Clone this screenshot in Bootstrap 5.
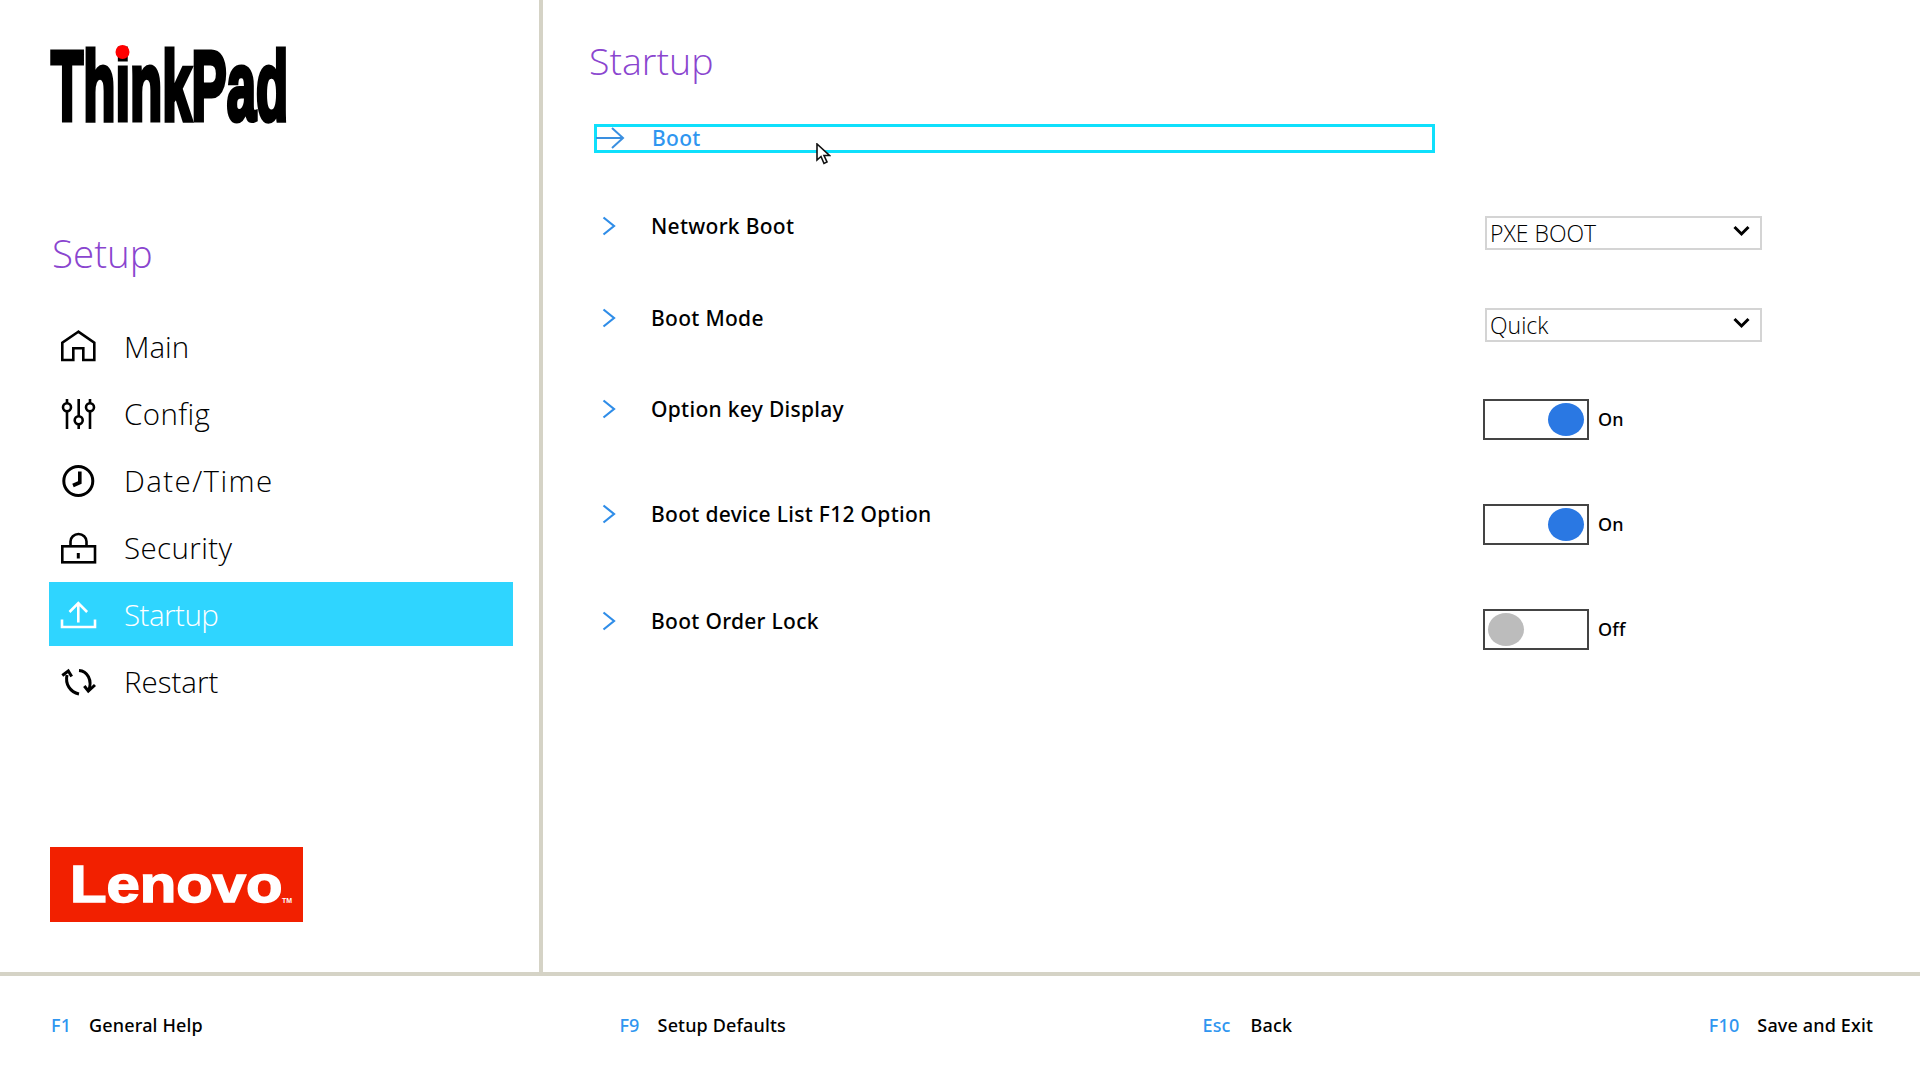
<!doctype html>
<html lang="en">
<head>
<meta charset="utf-8">
<title>ThinkPad Setup</title>
<link rel="stylesheet" href="https://cdn.jsdelivr.net/npm/bootstrap@5.3.0/dist/css/bootstrap.min.css">
<style>
html,body{height:100%;overflow:hidden;background:#fff}
body{font-family:"Open Sans","Noto Sans",sans-serif;color:#000}
.top-area{height:972px}
.side-pane{width:543px;flex:none;border-right:4px solid #d5d3c6;padding:24px 26px 0 50px}
.logo-think{display:block;width:240px;height:120px}
.logo-think text{font:700 98px "Liberation Sans",sans-serif;fill:#000;stroke:#000;stroke-width:5px}
.setup-title{font-size:38.500px;font-weight:300;color:#8a45cf;margin:83px 0 0 2px;line-height:52px;height:52px}
.side-nav{margin:35px 0 0 -1px;display:flex;flex-direction:column;gap:3px}
.side-item{height:64px;display:flex;align-items:center;color:#000;font-size:29.500px;font-weight:300;text-decoration:none;padding:2px 0 0 11px}
.side-item svg{width:38px;height:36px;flex:none;margin-right:26px;fill:none;stroke:#000;stroke-width:2.600}
.side-item.is-active{background:#2fd5ff;color:#fff}
.side-item.is-active svg{stroke:#fff}
.wide-label{letter-spacing:1.400px}
.mid-label{letter-spacing:.4px}
.tight-label{letter-spacing:-.5px}
.logo-lenovo{display:block;margin-top:134px;width:253px;height:75px}
.logo-lenovo text{font-family:"Liberation Sans",sans-serif;font-weight:700;fill:#fff}
.main-pane{padding:36px 0 0 46px}
.page-title{font-size:37.500px;font-weight:300;color:#8a45cf;margin:0;line-height:50px;height:50px}
.focus-row{position:relative;width:841px;height:29px;margin:38px 0 0 5px;border:3px solid #0fe0fc;display:flex;align-items:center;color:#2f96f0;font-family:"Noto Sans","Open Sans",sans-serif;font-size:21px;font-weight:500;letter-spacing:.3px;padding:1px 0 0 55px}
.focus-row svg.arrow{position:absolute;left:-1px;top:0;width:30px;height:22px;fill:none;stroke:#3a8fe0;stroke-width:2}
.pointer{position:absolute;left:219px;top:16px;width:15px;height:22px}
.setting-grid{display:grid;grid-template-rows:92px 91px 105px 105px 60px;margin-top:63px;margin-left:1px}
.setting-row{display:flex;align-items:flex-start}
.setting-name{width:893px;flex:none;display:flex;align-items:center;font-family:"Noto Sans","Open Sans",sans-serif;font-size:21px;font-weight:500;letter-spacing:.3px;height:22px;color:#000}
.setting-name.nudge-low{margin-top:2px}
.setting-name svg{width:14px;height:20px;flex:none;margin:-2px 35px 0 12px;fill:none;stroke:#2f8de8;stroke-width:2.200}
.opt-select{width:277px;height:34px;margin-left:2px;border:2px solid #d4d4d4;border-radius:0;padding:0 30px 0 3px;font-size:23px;font-weight:300;color:#000;line-height:30px;background-position:right 10px top 7px;background-size:17px 12px;background-image:url("data:image/svg+xml,%3csvg xmlns='http://www.w3.org/2000/svg' viewBox='0 0 17 12'%3e%3cpath fill='none' stroke='%23000' stroke-width='3' d='M1.500 2l7 7 7-7'/%3e%3c/svg%3e")}
.opt-toggle{display:flex;align-items:center;gap:9px;font-family:"Noto Sans","Open Sans",sans-serif;font-size:18px;font-weight:500;letter-spacing:.2px}
.toggle-box{width:106px;height:41px;border:2px solid #444;display:flex;align-items:center;padding:0 3px;background:#fff}
.toggle-box.on{justify-content:flex-end}
.toggle-knob{width:36px;height:33px;border-radius:50%;background:#2a78e3}
.toggle-box:not(.on) .toggle-knob{background:#bcbcbc}
.foot-bar{flex-grow:1;border-top:4px solid #d5d3c6;padding:0 47px 6px 51px;display:flex;justify-content:space-between;align-items:center;font-family:"Noto Sans","Open Sans",sans-serif;font-size:18px;font-weight:500;letter-spacing:.15px}
.foot-key{color:#2f96f0;font-weight:500;margin-right:18px}
.foot-key.gap-wide{margin-right:20px}
</style>
</head>
<body>
<div class="d-flex flex-column vh-100">
  <div class="top-area d-flex">
    <aside class="side-pane">
      <svg class="logo-think" viewBox="0 0 240 120" role="img" aria-label="ThinkPad">
        <text transform="translate(1,95.500) scale(.538,1)">ThinkPad</text>
        <circle cx="72.500" cy="28" r="7" fill="#f00"/>
      </svg>
      <h2 class="setup-title">Setup</h2>
      <nav class="side-nav">
        <a class="side-item" href="#"><svg viewBox="0 0 38 36"><path d="M18.300 2.700L2.300 13.700V31H13.300V19.300H23.300V31H34.300V13.700Z"/></svg>Main</a>
        <a class="side-item" href="#"><svg viewBox="0 0 38 36"><path d="M7 3V7M7 15.500V33M18.700 3V20M18.700 28.500V33M30 3V7M30 15.500V33"/><circle cx="7" cy="11.300" r="4"/><circle cx="18.700" cy="24.300" r="4"/><circle cx="30" cy="11.300" r="4"/></svg><span class="mid-label">Config</span></a>
        <a class="side-item" href="#"><svg viewBox="0 0 38 36"><circle cx="18.300" cy="18" r="14.500" stroke-width="3"/><path d="M19.800 8.500V19.500L13 22.500" stroke-width="3.600"/></svg><span class="wide-label">Date/Time</span></a>
        <a class="side-item" href="#"><svg viewBox="0 0 38 36"><rect x="2.300" y="16.300" width="32.700" height="16"/><path d="M10.500 16.300V11.500a8 7.500 0 0 1 16 0V16.300"/><path d="M18.300 23v5.500" stroke-width="3"/></svg><span class="mid-label">Security</span></a>
        <a class="side-item is-active" href="#"><svg viewBox="0 0 38 36"><path d="M18.300 25.500V6.500M9.500 15l8.800-9 8.800 9"/><path d="M2 22.500V30H35V22.500"/></svg><span class="tight-label">Startup</span></a>
        <a class="side-item" href="#"><svg viewBox="0 0 38 36"><path d="M7 11C5 20 10 28 19 30" stroke-width="3"/><path d="M2.300 11.500L8.300 7L11.700 12.500" stroke-width="3"/><path d="M19 6.500C27 7 33 16 28.500 27" stroke-width="3"/><path d="M24.300 22L28.300 27L35 21" stroke-width="3"/></svg>Restart</a>
      </nav>
      <svg class="logo-lenovo" viewBox="0 0 253 75" role="img" aria-label="Lenovo">
        <rect width="253" height="75" fill="#f22000"/>
        <text transform="translate(20,55) scale(1.150,1)" font-size="52" stroke="#fff" stroke-width="1.500">Lenovo</text>
        <text x="232" y="56" font-size="7">TM</text>
      </svg>
    </aside>
    <main class="main-pane flex-grow-1">
      <h1 class="page-title">Startup</h1>
      <div class="focus-row">
        <svg class="arrow" viewBox="0 0 30 22"><path d="M0 11H27M16 1L27 11L16 21"/></svg>
        Boot
        <svg class="pointer" viewBox="0 0 15 22"><path d="M1 1V17L5 13.500L8 20.500L11 19L8 12.500H13.500Z" fill="#fff" stroke="#111" stroke-width="1.600"/></svg>
      </div>
      <div class="setting-grid">
        <div class="setting-row">
          <div class="setting-name"><svg viewBox="0 0 14 20"><path d="M1.500 1.500L12 10L1.500 18.500"/></svg>Network Boot</div>
          <select class="form-select opt-select"><option>PXE BOOT</option></select>
        </div>
        <div class="setting-row">
          <div class="setting-name"><svg viewBox="0 0 14 20"><path d="M1.500 1.500L12 10L1.500 18.500"/></svg>Boot Mode</div>
          <select class="form-select opt-select"><option>Quick</option></select>
        </div>
        <div class="setting-row">
          <div class="setting-name"><svg viewBox="0 0 14 20"><path d="M1.500 1.500L12 10L1.500 18.500"/></svg>Option key Display</div>
          <div class="opt-toggle"><div class="toggle-box on"><div class="toggle-knob"></div></div>On</div>
        </div>
        <div class="setting-row">
          <div class="setting-name"><svg viewBox="0 0 14 20"><path d="M1.500 1.500L12 10L1.500 18.500"/></svg>Boot device List F12 Option</div>
          <div class="opt-toggle"><div class="toggle-box on"><div class="toggle-knob"></div></div>On</div>
        </div>
        <div class="setting-row">
          <div class="setting-name nudge-low"><svg viewBox="0 0 14 20"><path d="M1.500 1.500L12 10L1.500 18.500"/></svg>Boot Order Lock</div>
          <div class="opt-toggle"><div class="toggle-box"><div class="toggle-knob"></div></div>Off</div>
        </div>
      </div>
    </main>
  </div>
  <footer class="foot-bar">
    <div><span class="foot-key">F1</span>General Help</div>
    <div><span class="foot-key">F9</span>Setup Defaults</div>
    <div><span class="foot-key gap-wide">Esc</span>Back</div>
    <div><span class="foot-key">F10</span>Save and Exit</div>
  </footer>
</div>
<script src="https://cdn.jsdelivr.net/npm/bootstrap@5.3.0/dist/js/bootstrap.bundle.min.js"></script>
</body>
</html>
